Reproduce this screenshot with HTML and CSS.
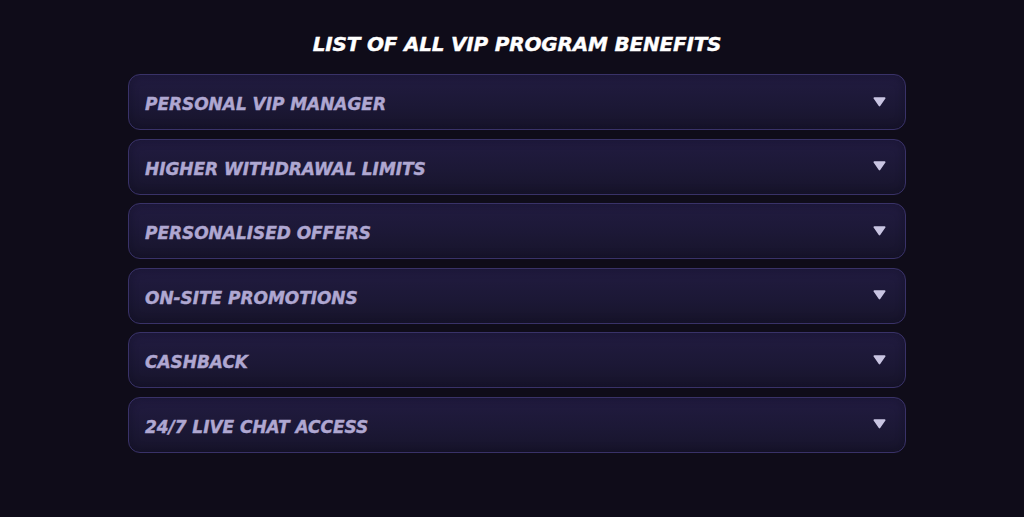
FILE: index.html
```html
<!DOCTYPE html>
<html lang="en">
<head>
<meta charset="utf-8">
<title>VIP Program Benefits</title>
<link rel="stylesheet" href="styles.css">
</head>
<body>
<main class="benefits">
  <h2 class="benefits-title">LIST OF ALL VIP PROGRAM BENEFITS</h2>
  <ul class="benefit-list">
    <li class="benefit"><span class="benefit-label">PERSONAL VIP MANAGER</span><svg class="benefit-arrow" viewBox="0 0 12 10"><path d="M1.2 1h9.6a.8.8 0 0 1 .65 1.25l-4.8 6.9a.8.8 0 0 1-1.3 0L.55 2.25A.8.8 0 0 1 1.2 1z"/></svg></li>
    <li class="benefit"><span class="benefit-label">HIGHER WITHDRAWAL LIMITS</span><svg class="benefit-arrow" viewBox="0 0 12 10"><path d="M1.2 1h9.6a.8.8 0 0 1 .65 1.25l-4.8 6.9a.8.8 0 0 1-1.3 0L.55 2.25A.8.8 0 0 1 1.2 1z"/></svg></li>
    <li class="benefit"><span class="benefit-label">PERSONALISED OFFERS</span><svg class="benefit-arrow" viewBox="0 0 12 10"><path d="M1.2 1h9.6a.8.8 0 0 1 .65 1.25l-4.8 6.9a.8.8 0 0 1-1.3 0L.55 2.25A.8.8 0 0 1 1.2 1z"/></svg></li>
    <li class="benefit"><span class="benefit-label">ON-SITE PROMOTIONS</span><svg class="benefit-arrow" viewBox="0 0 12 10"><path d="M1.2 1h9.6a.8.8 0 0 1 .65 1.25l-4.8 6.9a.8.8 0 0 1-1.3 0L.55 2.25A.8.8 0 0 1 1.2 1z"/></svg></li>
    <li class="benefit"><span class="benefit-label">CASHBACK</span><svg class="benefit-arrow" viewBox="0 0 12 10"><path d="M1.2 1h9.6a.8.8 0 0 1 .65 1.25l-4.8 6.9a.8.8 0 0 1-1.3 0L.55 2.25A.8.8 0 0 1 1.2 1z"/></svg></li>
    <li class="benefit"><span class="benefit-label">24/7 LIVE CHAT ACCESS</span><svg class="benefit-arrow" viewBox="0 0 12 10"><path d="M1.2 1h9.6a.8.8 0 0 1 .65 1.25l-4.8 6.9a.8.8 0 0 1-1.3 0L.55 2.25A.8.8 0 0 1 1.2 1z"/></svg></li>
  </ul>
</main>
</body>
</html>
```

FILE: styles.css
```css
html, body {
  margin: 0;
  padding: 0;
  background: #0f0c19;
  height: 100%;
}

body {
  font-family: "DejaVu Sans", "Open Sans", sans-serif;
}

.benefits {
  width: 778px;
  margin-left: 128px;
  padding-top: 30px;
}

.benefits-title {
  margin: 0 0 16px;
  text-align: center;
  color: #ffffff;
  font-size: 20px;
  line-height: 28px;
  font-weight: 700;
  font-style: italic;
  letter-spacing: -0.2px;
  -webkit-text-stroke: 0.4px #ffffff;
}

.benefit-list {
  list-style: none;
  margin: 0;
  padding: 0;
  display: flex;
  flex-direction: column;
  gap: 8.6px;
}

.benefit {
  box-sizing: border-box;
  height: 56px;
  display: flex;
  align-items: center;
  justify-content: space-between;
  padding: 0 19px 0 16px;
  border: 1px solid #393268;
  border-radius: 12px;
  background: linear-gradient(180deg, #211b40 0%, #1c1836 55%, #17142b 100%);
  box-shadow: inset 0 0 10px rgba(10, 8, 22, 0.35);
}

.benefit-label {
  color: #afa7d1;
  font-size: 17px;
  font-weight: 700;
  font-style: italic;
  letter-spacing: -0.05px;
  -webkit-text-stroke: 0.4px #afa7d1;
  margin-top: 4px;
}

.benefit-arrow {
  width: 13px;
  height: 11px;
  fill: #c9c5e2;
  margin-top: -2px;
}
```
